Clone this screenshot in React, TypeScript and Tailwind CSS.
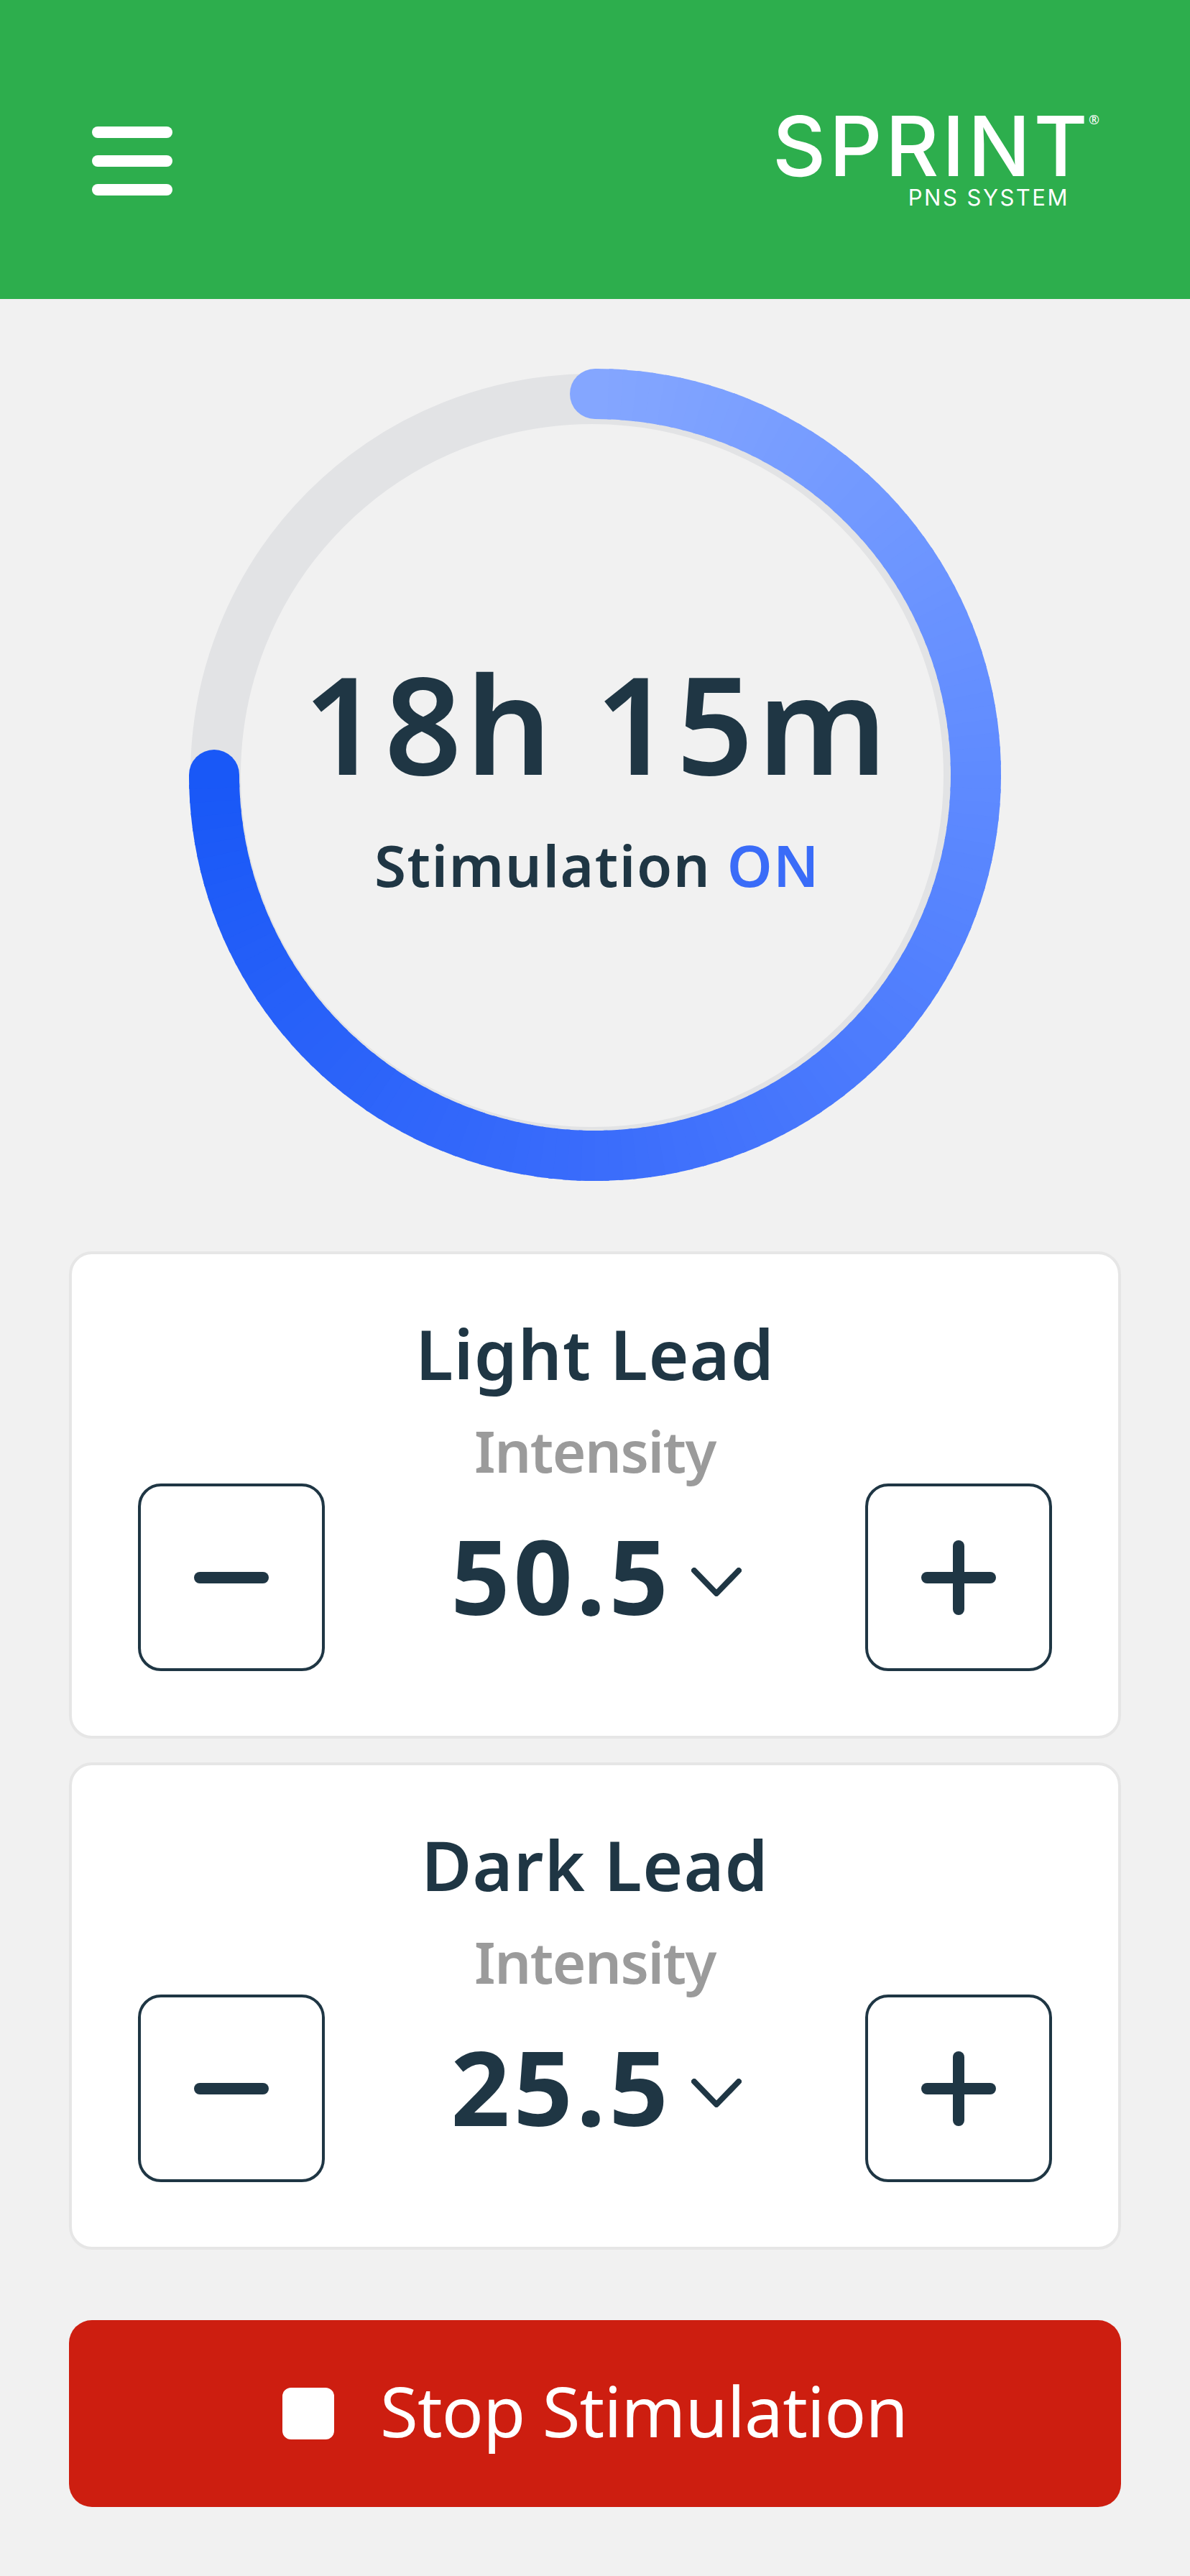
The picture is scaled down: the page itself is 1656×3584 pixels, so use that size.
import React from "react";

const stops: [number, [number, number, number]][] = [
  [0, [0x84, 0xa6, 0xff]],
  [0.33, [0x5f, 0x8b, 0xff]],
  [0.67, [0x3a, 0x6c, 0xfb]],
  [1, [0x19, 0x58, 0xf7]],
];

function colorAt(t: number) {
  for (let i = 1; i < stops.length; i++) {
    if (t <= stops[i][0]) {
      const [a, ca] = stops[i - 1];
      const [b, cb] = stops[i];
      const k = (t - a) / (b - a);
      const c = ca.map((v, j) => Math.round(v + (cb[j] - v) * k));
      return `rgb(${c[0]},${c[1]},${c[2]})`;
    }
  }
  return "rgb(25,88,247)";
}

const R = 530;
const C = 600;
const N = 135;

function point(deg: number) {
  const rad = ((deg - 90) * Math.PI) / 180;
  return [C + R * Math.cos(rad), C + R * Math.sin(rad)];
}

function Ring() {
  const segs = [];
  for (let i = 0; i < N; i++) {
    const a0 = (i / N) * 270;
    const a1 = Math.min(((i + 1.3) / N) * 270, 270);
    const [x0, y0] = point(a0);
    const [x1, y1] = point(a1);
    segs.push(
      <path
        key={i}
        d={`M${x0} ${y0} A${R} ${R} 0 0 1 ${x1} ${y1}`}
        fill="none"
        stroke={colorAt(i / (N - 1))}
        strokeWidth={70}
      />
    );
  }
  const [sx, sy] = point(0);
  const [ex, ey] = point(270);
  return (
    <svg width="1200" height="1200" viewBox="0 0 1200 1200" className="absolute inset-0 m-auto">
      <circle cx="596" cy="601" r="524" fill="none" stroke="#e2e3e5" strokeWidth="70" />
      <circle cx={sx} cy={sy} r="35" fill={colorAt(0)} />
      <circle cx={ex} cy={ey} r="35" fill={colorAt(1)} />
      {segs}
    </svg>
  );
}

function LeadCard({ title, value }: { title: string; value: string }) {
  return (
    <section className="h-[678px] rounded-[32px] border-4 border-[#e6e6e6] bg-white flex flex-col items-center pt-[73px]">
      <h2 className="text-[96px] leading-[130px] font-semibold text-[#1f3644] tracking-[1px]">{title}</h2>
      <div className="mt-[18px] text-[80px] leading-[104px] font-semibold text-[#9b9b9b] tracking-[-1.5px]">Intensity</div>
      <div className="w-full px-[92px] -mt-[6px] flex items-start justify-between">
        <button className="w-[260px] h-[261px] rounded-[32px] border-4 border-[#1f3644] flex items-center justify-center">
          <svg width="104" height="16" viewBox="0 0 104 16">
            <rect width="104" height="16" rx="8" fill="#1f3644" />
          </svg>
        </button>
        <div className="flex items-center h-[260px] gap-[27px] pl-[3px]">
          <span className="mb-[6px] text-[144px] leading-[196px] font-bold text-[#1f3644] tracking-[5px]">{value}</span>
          <svg width="70" height="40" viewBox="0 0 70 40" fill="none" className="mt-[14px]">
            <path d="M4 4 L35 36 L66 4" stroke="#1f3644" strokeWidth="8" strokeLinecap="round" strokeLinejoin="round" />
          </svg>
        </div>
        <button className="w-[260px] h-[261px] rounded-[32px] border-4 border-[#1f3644] flex items-center justify-center">
          <svg width="104" height="104" viewBox="0 0 104 104">
            <rect y="44" width="104" height="16" rx="8" fill="#1f3644" />
            <rect x="44" width="16" height="104" rx="8" fill="#1f3644" />
          </svg>
        </button>
      </div>
    </section>
  );
}

export default function App() {
  return (
    <div className="w-[1656px] h-[3584px] bg-[#f1f1f1] font-['Noto_Sans',sans-serif] overflow-hidden">
      <header className="h-[416px] bg-[#2dae4d] flex items-start justify-between pl-[128px] pr-[128px]">
        <div className="mt-[176px] w-[112px] flex flex-col gap-[24px]">
          <div className="h-[16px] rounded-full bg-white" />
          <div className="h-[16px] rounded-full bg-white" />
          <div className="h-[16px] rounded-full bg-white" />
        </div>
        <div className="relative mt-[154px] w-[448px] font-['Inter',sans-serif] text-white">
          <div className="text-[115px] leading-[100px] font-medium tracking-[4.5px] -ml-[5px]">SPRINT</div>
          <div className="absolute right-[-2px] top-[1px] font-['Noto_Sans',sans-serif] text-[18px] leading-[22px]">®</div>
          <div className="absolute right-[40px] top-[103px] text-[31px] leading-[36px] font-normal tracking-[2.5px] whitespace-nowrap">PNS SYSTEM</div>
        </div>
      </header>
      <main className="px-[96px]">
        <div className="relative mt-[62px] h-[1200px] flex flex-col items-center">
          <Ring />
          <div className="relative pt-[402px] pl-[6px] flex flex-col items-center">
            <div className="text-[188px] leading-[250px] font-semibold text-[#1f3644] tracking-[5.5px] whitespace-nowrap">18h 15m</div>
            <div className="mt-[21px] text-[80px] leading-[104px] font-semibold text-[#1f3644] tracking-[1.5px] whitespace-nowrap">
              Stimulation <span className="text-[#3a6cf8]">ON</span>
            </div>
          </div>
        </div>
        <div className="mt-[63px] flex flex-col gap-[33px]">
          <LeadCard title="Light Lead" value="50.5" />
          <LeadCard title="Dark Lead" value="25.5" />
        </div>
        <button className="mt-[98px] w-full h-[260px] rounded-[32px] bg-[#cd1e10] flex items-center justify-center gap-[64px] text-white">
          <span className="w-[72px] h-[72px] rounded-[12px] bg-white" />
          <span className="-mt-[8px] text-[96px] leading-[130px] font-normal tracking-[-0.75px]">Stop Stimulation</span>
        </button>
      </main>
    </div>
  );
}
